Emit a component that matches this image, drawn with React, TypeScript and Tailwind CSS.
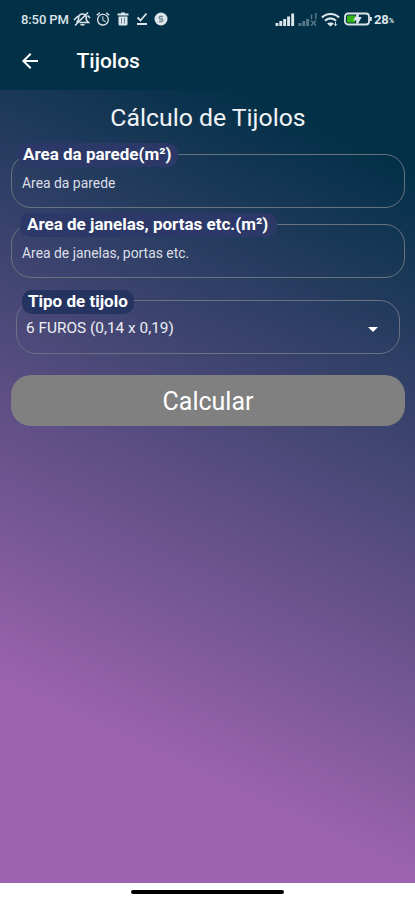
import { useState } from "react";
import { clsx } from "clsx";
import { MdAlarm, MdArrowBack, MdArrowDropDown } from "react-icons/md";

type FieldProps = {
  label: string;
  placeholder: string;
  labelClass: string;
  value: string;
  onChange: (value: string) => void;
};

function SignalIcon({ muted = false }: { muted?: boolean }) {
  return (
    <svg width="20" height="13" viewBox="0 0 20 13" fill="currentColor" className={muted ? "opacity-40" : ""}>
      <rect x="0.5" y="10" width="2.9" height="3" />
      <rect x="4.3" y="8" width="2.9" height="5" />
      <rect x="8.2" y="6" width="2.9" height="7" />
      {muted ? (
        <path d="M13.5 1.5v4.500M17.800 0v6M13 7.500l5 5M18 7.500l-5 5" stroke="currentColor" strokeWidth="1.500" />
      ) : (
        <>
          <rect x="12.1" y="3.5" width="2.9" height="9.500" />
          <rect x="16.2" y="0.5" width="2.9" height="12.500" />
        </>
      )}
    </svg>
  );
}

function StatusBar() {
  return (
    <div className="flex h-[38px] items-center pl-[21px] pr-[21px] text-[#dce5ea]">
      <span className="w-[50px] whitespace-nowrap pt-px text-[13px] font-medium tracking-[-0.100px]">8:50 PM</span>
      <svg width="18" height="16" viewBox="0 0 18 16" fill="none" stroke="currentColor" strokeWidth="1.600" className="ml-[2px]">
        <path d="M3.500 11.500L5.500 9V6.500C6 4 7.500 3 9.500 3s3.500 1 3.800 3.500V9l2.200 2.500H6.500" />
        <path d="M7.500 13.800h4M2 14.500L15 1.500M1 9L5 5M14.500 4.500l2.500 2.500" />
      </svg>
      <MdAlarm className="ml-[4px] h-4 w-4" />
      <svg width="12" height="14" viewBox="0 0 12 14" className="ml-[6px]">
        <path d="M0.500 1.500h3.500V0.500h4v1h3.500v2H0.500zM1.500 4.500h9v7.500a1.500 1.500 0 0 1-1.500 1.500H3a1.500 1.500 0 0 1-1.500-1.500z" fill="currentColor" />
        <path d="M4.500 6v5.500M7.500 6v5.500" stroke="#6f8793" strokeWidth="1" />
      </svg>
      <svg width="12" height="14" viewBox="0 0 12 14" fill="none" stroke="currentColor" strokeWidth="1.800" className="ml-[7px]">
        <path d="M1.500 5.500L4.500 8.500L10.500 1.500M1 12h10" />
      </svg>
      <svg width="14" height="14" viewBox="0 0 14 14" className="ml-[6px]">
        <circle cx="7" cy="7" r="6.500" fill="currentColor" />
        <path d="M9 4.500H6.500a1.200 1.200 0 0 0 0 2.500h1a1.200 1.200 0 0 1 0 2.500H5" fill="none" stroke="#6f8793" strokeWidth="1.300" />
      </svg>

      <div className="ml-auto flex items-center">
        <SignalIcon />
        <span className="ml-[3px] flex">
          <SignalIcon muted />
        </span>
        <svg width="19" height="15" viewBox="0 0 19 15" fill="none" stroke="currentColor" strokeWidth="2.200" className="ml-[3px]">
          <path d="M1 5.500C5.500 0.800 13.500 0.800 18 5.500M4 8.800c3.200-3.300 7.800-3.300 11 0" />
          <path d="M6 11.500l3.500 3l3.500-3c-1.600-1.500-5.400-1.500-7 0z" fill="currentColor" stroke="none" />
          <path d="M14.500 10v4M13 12.200l1.500 1.500l1.500-1.500" strokeWidth="1" />
        </svg>
        <svg width="28" height="14" viewBox="0 0 28 14" fill="none" className="ml-[4px]">
          <rect x="1" y="1.500" width="24" height="11" rx="3" stroke="currentColor" strokeWidth="1.800" />
          <rect x="3" y="3.500" width="8" height="7" fill="#35b316" />
          <path d="M14 2L11 7.500h2.500l-0.500 4l3-5.500h-2.500z" fill="currentColor" stroke="currentColor" strokeWidth="2" />
          <rect x="26" y="5" width="1.800" height="4" fill="currentColor" />
        </svg>
        <span className="ml-[2px] text-[13px] font-bold leading-none">28</span>
        <span className="mt-1 text-[7px] font-bold leading-none">%</span>
      </div>
    </div>
  );
}

function Field({ label, placeholder, labelClass, value, onChange }: FieldProps) {
  return (
    <label className="relative block h-[54.500px] rounded-[20px] border border-[#67747f]">
      <span
        className={clsx(
          "absolute top-[-12px] flex h-6 items-center whitespace-nowrap rounded-[10px] bg-[#2c3968] pt-px text-[17px] font-bold text-white",
          labelClass
        )}
      >
        {label}
      </span>
      <input
        value={value}
        onChange={(event) => onChange(event.target.value)}
        placeholder={placeholder}
        className="h-full w-full bg-transparent px-[10px] pt-[5px] text-[13.900px] text-white outline-none placeholder:text-[#dcdfe8]"
      />
    </label>
  );
}

export default function App() {
  const [wallArea, setWallArea] = useState("");
  const [openingsArea, setOpeningsArea] = useState("");

  return (
    <div className="flex h-[900px] w-[415px] flex-col overflow-hidden bg-white font-[Roboto,sans-serif]">
      <header className="h-[90px] bg-[#023047] text-white">
        <StatusBar />
        <div className="flex h-[45px] items-center pl-[18px]">
          <button type="button" aria-label="Voltar">
            <MdArrowBack className="h-6 w-6" />
          </button>
          <h1 className="ml-[34.500px] pt-[3px] text-[21px] font-medium">Tijolos</h1>
        </div>
      </header>

      <main className="flex-1 bg-[linear-gradient(205deg,#023047_8%,#9b63ae_79.500%)] pl-[11px] pr-[10px] pt-[11px]">
        <h2 className="text-center text-[24.800px] leading-[34px] text-[#f1f3f6]">Cálculo de Tijolos</h2>

        <div className="mt-[18.500px] flex flex-col gap-[15.500px]">
          <Field
            label="Area da parede(m²)"
            placeholder="Area da parede"
            labelClass="left-[6px] pl-[5px] pr-[6px]"
            value={wallArea}
            onChange={setWallArea}
          />
          <Field
            label="Area de janelas, portas etc.(m²)"
            placeholder="Area de janelas, portas etc."
            labelClass="left-[8px] pl-[7px] pr-[9px]"
            value={openingsArea}
            onChange={setOpeningsArea}
          />
        </div>

        <div className="relative mx-[5px] mt-[21.500px] h-[54.500px] rounded-[20px] border border-[#697183]">
          <span className="absolute left-[5px] top-[-11px] flex h-6 items-center rounded-[10px] bg-[#24335f] px-[6px] text-[17px] font-bold text-white">
            Tipo de tijolo
          </span>
          <button type="button" className="flex h-full w-full items-center justify-between pl-[9px] pr-[14px] pt-[4px] text-[15.400px] text-[#eceef4]">
            6 FUROS (0,14 x 0,19)
            <MdArrowDropDown className="h-6 w-6 text-white" />
          </button>
        </div>

        <button
          type="button"
          className="mt-[21px] h-[51px] w-full rounded-[20px] bg-[#808080] pt-[3px] text-[25px] text-white"
        >
          Calcular
        </button>
      </main>

      <footer className="flex h-[17px] justify-center bg-white pt-[7px]">
        <div className="h-[4px] w-[153px] rounded-full bg-black" />
      </footer>
    </div>
  );
}
